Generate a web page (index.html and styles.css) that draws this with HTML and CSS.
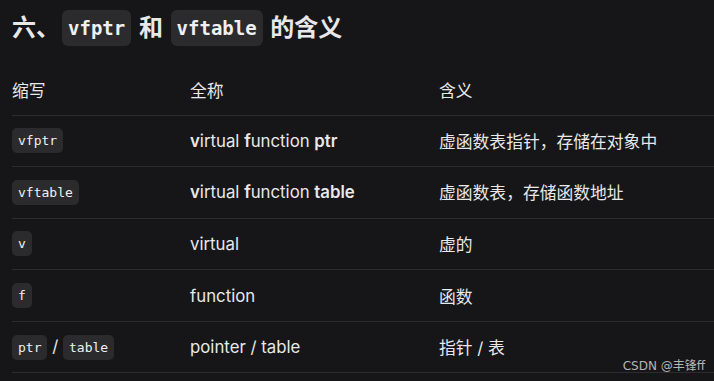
FILE: index.html
```html
<!DOCTYPE html>
<html lang="zh-CN">
<head>
    <meta charset="UTF-8">
    <meta name="viewport" content="width=device-width, initial-scale=1.0">
    <title>vfptr 和 vftable 的含义</title>
    <link rel="stylesheet" href="styles.css">
</head>
<body>

<div class="article">
    <h2 class="title">六、<code>vfptr</code> 和 <code>vftable</code> 的含义</h2>

    <table class="terms">
        <thead>
            <tr>
                <th class="col-abbr">缩写</th>
                <th class="col-full">全称</th>
                <th>含义</th>
            </tr>
        </thead>
        <tbody>
            <tr>
                <td><code>vfptr</code></td>
                <td><b>v</b>irtual <b>f</b>unction <b>ptr</b></td>
                <td>虚函数表指针，存储在对象中</td>
            </tr>
            <tr>
                <td><code>vftable</code></td>
                <td><b>v</b>irtual <b>f</b>unction <b>table</b></td>
                <td>虚函数表，存储函数地址</td>
            </tr>
            <tr>
                <td><code>v</code></td>
                <td>virtual</td>
                <td>虚的</td>
            </tr>
            <tr>
                <td><code>f</code></td>
                <td>function</td>
                <td>函数</td>
            </tr>
            <tr>
                <td><code>ptr</code> / <code>table</code></td>
                <td>pointer / table</td>
                <td>指针 / 表</td>
            </tr>
        </tbody>
    </table>
</div>

<div class="watermark">CSDN @丰锋ff</div>

</body>
</html>
```

FILE: styles.css
```css
/* General Reset */
* {
    margin: 0;
    padding: 0;
    box-sizing: border-box;
}

body {
    background-color: #161618;
    color: #e8e8ea;
    font-family: Inter, "Noto Sans CJK SC", sans-serif;
    overflow: hidden;
    position: relative;
    min-height: 100vh;
}

.article {
    padding: 10px 0 0 12px;
}

.title {
    font-size: 24px;
    font-weight: 700;
    line-height: 36px;
    height: 36px;
    display: flex;
    align-items: center;
    white-space: pre;
}

.title code {
    font-size: 19px;
    font-weight: 700;
    line-height: 36px;
    padding: 0 6px;
    border-radius: 6px;
    margin: 0 2px;
}

code {
    font-family: "DejaVu Sans Mono", "Liberation Mono", monospace;
    font-weight: 400;
    background-color: #2b2b2e;
    color: #f0f0f2;
    border-radius: 5px;
    display: inline-block;
}

.terms {
    width: 100%;
    margin-top: 17px;
    border-collapse: collapse;
    font-size: 16.8px;
}

.terms th {
    font-weight: 400;
    text-align: left;
    height: 52px;
    vertical-align: middle;
    border-bottom: 1px solid #2c2c2f;
    padding-top: 2px;
}

.terms td {
    height: 51.6px;
    vertical-align: middle;
    border-bottom: 1px solid #2c2c2f;
}

.terms td code {
    font-size: 13px;
    line-height: 25px;
    padding: 0 6px;
}

.col-abbr {
    width: 178px;
}

.col-full {
    width: 249px;
}

.terms b {
    font-weight: 600;
}

.watermark {
    position: absolute;
    right: 9px;
    bottom: 8px;
    font-size: 12px;
    color: #b4b4b6;
    font-family: "DejaVu Sans", "Noto Sans CJK SC", sans-serif;
}
```
